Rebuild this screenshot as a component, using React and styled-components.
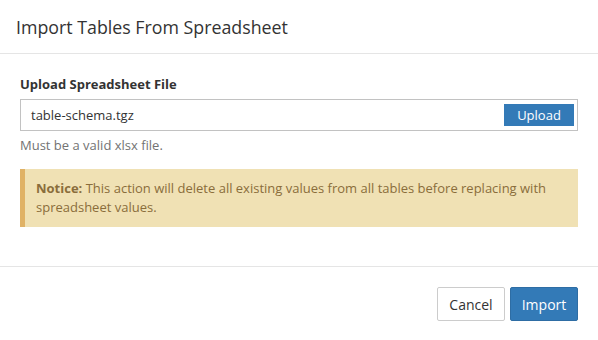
import React from "react";
import styled, { createGlobalStyle } from "styled-components";

const Global = createGlobalStyle`
  html, body { margin: 0; padding: 0; background: #fff; }
  body { font-family: "Open Sans", "Noto Sans", sans-serif; color: #333; }
  * { box-sizing: border-box; }
`;

const Modal = styled.div`
  width: 598px;
  height: 340px;
  display: flex;
  flex-direction: column;
  background: #fff;
`;

const Header = styled.div`
  padding: 14px 16px 13px;
  border-bottom: 1px solid #e5e5e5;
`;

const Title = styled.h4`
  margin: 0;
  font-size: 17.8px;
  line-height: 26px;
  font-weight: 400;
  color: #333;
`;

const Body = styled.div`
  padding: 21px 20px 39px;
  border-bottom: 1px solid #e5e5e5;
`;

const Label = styled.label`
  display: block;
  font-size: 13px;
  line-height: 18px;
  font-weight: 700;
  color: #333;
  margin-bottom: 6px;
`;

const FileField = styled.div`
  display: flex;
  align-items: center;
  justify-content: space-between;
  height: 32px;
  border: 1px solid #c2c2c2;
  padding: 0 3px 0 10px;
`;

const FileName = styled.span`
  font-size: 13px;
  color: #333;
`;

const SmallButton = styled.button`
  height: 22px;
  width: 70px;
  border: none;
  background: #337ab7;
  color: #fff;
  font-family: inherit;
  font-size: 13px;
  padding: 0;
`;

const Help = styled.div`
  margin-top: 5px;
  font-size: 13px;
  line-height: 18px;
  color: #737373;
`;

const Notice = styled.div`
  margin-top: 15px;
  background: #f0e1b4;
  border-left: 5px solid #e0b266;
  padding: 10px 12px 10px 11px;
  font-size: 13px;
  line-height: 19px;
  color: #8a6d3b;
`;

const Strong = styled.strong`
  font-weight: 700;
`;

const Footer = styled.div`
  display: flex;
  justify-content: flex-end;
  gap: 5px;
  padding: 20px 20px;
`;

const Button = styled.button`
  height: 34px;
  width: 68px;
  font-family: inherit;
  font-size: 14px;
  border-radius: 2px;
  border: 1px solid ${(p) => (p.$primary ? "#2e6da4" : "#ccc")};
  background: ${(p) => (p.$primary ? "#337ab7" : "#fff")};
  color: ${(p) => (p.$primary ? "#fff" : "#333")};
  padding: 0;
`;

export default function App() {
  return (
    <>
      <Global />
      <Modal>
        <Header>
          <Title>Import Tables From Spreadsheet</Title>
        </Header>
        <Body>
          <Label>Upload Spreadsheet File</Label>
          <FileField>
            <FileName>table-schema.tgz</FileName>
            <SmallButton>Upload</SmallButton>
          </FileField>
          <Help>Must be a valid xlsx file.</Help>
          <Notice>
            <Strong>Notice:</Strong> This action will delete all existing values from all tables before replacing with spreadsheet values.
          </Notice>
        </Body>
        <Footer>
          <Button>Cancel</Button>
          <Button $primary>Import</Button>
        </Footer>
      </Modal>
    </>
  );
}
